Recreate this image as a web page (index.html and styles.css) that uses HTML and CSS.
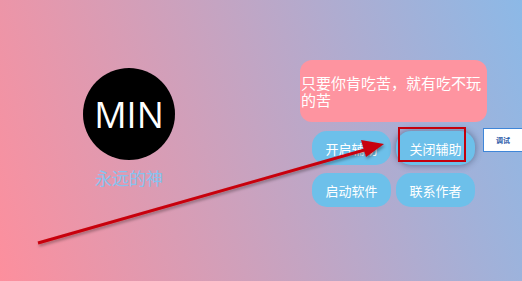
FILE: index.html
```html
<!DOCTYPE html>
<html lang="zh">
<head>
    <meta charset="UTF-8">
    <title>永远的神</title>
    <link rel="stylesheet" href="styles.css">
</head>
<body>
    <div class="page">
        <div class="profile">
            <div class="avatar">MIN</div>
            <div class="name">永远的神</div>
        </div>

        <div class="panel">
            <div class="quote">只要你肯吃苦，就有吃不玩的苦</div>
            <div class="actions">
                <div class="btn-grid">
                    <button class="btn">开启辅助</button>
                    <button class="btn btn-active">关闭辅助</button>
                    <button class="btn">启动软件</button>
                    <button class="btn">联系作者</button>
                </div>
                <button class="debug">调试</button>
            </div>
        </div>
    </div>

    <!-- annotation overlay -->
    <div class="mark-box"></div>
    <svg class="arrow" width="522" height="281" viewBox="0 0 522 281">
        <defs>
            <filter id="shadow" x="-10%" y="-10%" width="120%" height="130%">
                <feDropShadow dx="1" dy="2" stdDeviation="1.5" flood-color="#000" flood-opacity="0.35"/>
            </filter>
        </defs>
        <g filter="url(#shadow)">
            <line x1="38" y1="243" x2="368" y2="149" stroke="#c8000a" stroke-width="3"/>
            <polygon points="384,144 361,140 366,157" fill="#c8000a"/>
        </g>
    </svg>
</body>
</html>
```

FILE: styles.css
```css
body {
    margin: 0;
    width: 522px;
    height: 281px;
    overflow: hidden;
    font-family: "Noto Sans CJK SC", "Noto Sans", sans-serif;
    background: linear-gradient(72deg, #fd8f9d, #8cb9e7);
    position: relative;
}

.page {
    display: flex;
    align-items: flex-start;
}

.profile {
    display: flex;
    flex-direction: column;
    align-items: center;
    margin-left: 83px;
    margin-top: 68px;
    width: 92px;
}

.avatar {
    width: 92px;
    height: 92px;
    border-radius: 50%;
    background-color: #000;
    color: #fff;
    font-family: "Open Sans", sans-serif;
    font-size: 36px;
    display: flex;
    align-items: center;
    justify-content: center;
}

.name {
    margin-top: 8px;
    color: #86c2ee;
    font-size: 17px;
    line-height: 20px;
    white-space: nowrap;
}

.panel {
    margin-left: 125px;
    margin-top: 60px;
}

.quote {
    width: 187px;
    height: 62px;
    box-sizing: border-box;
    padding-left: 1px;
    border-radius: 12px;
    background-color: #fe94a0;
    color: #fff;
    font-size: 15px;
    line-height: 17px;
    display: flex;
    align-items: center;
}

.actions {
    display: flex;
    align-items: flex-start;
    margin-top: 9px;
    margin-left: 12px;
}

.btn-grid {
    display: grid;
    grid-template-columns: 79px 79px;
    column-gap: 5px;
    row-gap: 8px;
}

.btn {
    height: 34px;
    border: none;
    border-radius: 15px;
    background-color: #6dc0ea;
    color: #fff;
    font-family: "Noto Sans CJK SC", sans-serif;
    font-size: 13px;
    padding: 0;
}

.btn-active {
    box-shadow: 0 0 6px 1px rgba(40, 60, 90, 0.45);
}

.debug {
    margin-left: 8px;
    margin-top: -3px;
    width: 40px;
    height: 24px;
    padding: 0;
    background-color: #fff;
    border: 1px solid #3f86d8;
    color: #2a5aa8;
    font-family: "Noto Sans CJK SC", sans-serif;
    font-size: 7px;
    font-weight: bold;
    flex-shrink: 0;
}

.mark-box {
    position: absolute;
    left: 398px;
    top: 127px;
    width: 64px;
    height: 31px;
    border: 2px solid #c4000c;
}

.arrow {
    position: absolute;
    left: 0;
    top: 0;
}
```
